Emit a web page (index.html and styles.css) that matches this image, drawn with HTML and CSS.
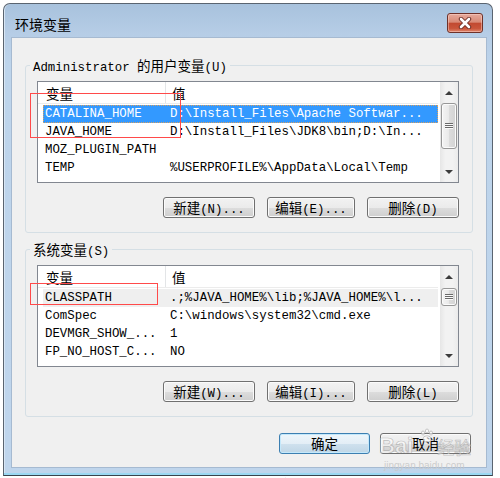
FILE: index.html
```html
<!DOCTYPE html>
<html>
<head>
<meta charset="utf-8">
<title>环境变量</title>
<link rel="stylesheet" href="styles.css">
</head>
<body>
<div class="page">
  <div class="window">
    <div class="titlebar">
      <span class="title">环境变量</span>
      <div class="close">
        <svg width="16" height="12" viewBox="0 0 16 12">
          <path d="M4 2 L12 10 M12 2 L4 10" stroke="#6a2a22" stroke-width="4.4" stroke-linecap="round" fill="none"/>
          <path d="M4 2 L12 10 M12 2 L4 10" stroke="#ffffff" stroke-width="2.6" stroke-linecap="round" fill="none"/>
        </svg>
      </div>
    </div>
    <div class="client">
      <fieldset class="group">
        <legend>Administrator <span class="cj">的用户变量</span>(U)</legend>
        <div class="listview">
          <div class="lv-main">
            <div class="lv-head"><span class="h1 cj">变量</span><span class="h2 cj">值</span></div>
            <div class="rows">
              <div class="row sel"><span class="c1">CATALINA_HOME</span><span class="c2">D:\Install_Files\Apache Softwar...</span></div>
              <div class="row"><span class="c1">JAVA_HOME</span><span class="c2">D:\Install_Files\JDK8\bin;D:\In...</span></div>
              <div class="row"><span class="c1">MOZ_PLUGIN_PATH</span><span class="c2"></span></div>
              <div class="row"><span class="c1">TEMP</span><span class="c2">%USERPROFILE%\AppData\Local\Temp</span></div>
            </div>
          </div>
          <div class="scroll">
            <div class="sb-btn"><span class="arrow-up"></span></div>
            <div class="thumb"><span class="grip"></span></div>
            <div class="sb-track"></div>
            <div class="sb-btn"><span class="arrow-down"></span></div>
          </div>
        </div>
        <div class="btnrow">
          <button class="btn"><span class="cj">新建</span>(N)...</button>
          <button class="btn"><span class="cj">编辑</span>(E)...</button>
          <button class="btn"><span class="cj">删除</span>(D)</button>
        </div>
      </fieldset>

      <fieldset class="group group-sys">
        <legend><span class="cj">系统变量</span>(S)</legend>
        <div class="listview">
          <div class="lv-main">
            <div class="lv-head"><span class="h1 cj">变量</span><span class="h2 cj">值</span></div>
            <div class="rows">
              <div class="row focus"><span class="c1">CLASSPATH</span><span class="c2">.;%JAVA_HOME%\lib;%JAVA_HOME%\l...</span></div>
              <div class="row"><span class="c1">ComSpec</span><span class="c2">C:\windows\system32\cmd.exe</span></div>
              <div class="row"><span class="c1">DEVMGR_SHOW_...</span><span class="c2">1</span></div>
              <div class="row"><span class="c1">FP_NO_HOST_C...</span><span class="c2">NO</span></div>
            </div>
          </div>
          <div class="scroll">
            <div class="sb-btn"><span class="arrow-up"></span></div>
            <div class="thumb thumb-small"><span class="grip"></span></div>
            <div class="sb-track"></div>
            <div class="sb-btn"><span class="arrow-down"></span></div>
          </div>
        </div>
        <div class="btnrow">
          <button class="btn"><span class="cj">新建</span>(W)...</button>
          <button class="btn"><span class="cj">编辑</span>(I)...</button>
          <button class="btn"><span class="cj">删除</span>(L)</button>
        </div>
      </fieldset>

      <div class="dlgbtns">
        <button class="btn btn-default"><span class="cj">确定</span></button>
        <button class="btn"><span class="cj">取消</span></button>
      </div>
    </div>
  </div>
  <div class="below">环境变量设置 完成后如图</div>

  <div class="mark mark-user"></div>
  <div class="mark mark-sys"></div>

  <div class="watermark">
    <div class="wm-top">
      <span class="wm-bai">Bai</span>
      <svg class="wm-paw" width="16" height="16" viewBox="0 0 16 16">
        <g fill="rgba(255,255,255,0.6)" stroke="rgba(150,150,150,0.6)" stroke-width="0.8">
          <ellipse cx="4" cy="5" rx="1.6" ry="2"/>
          <ellipse cx="8" cy="3" rx="1.6" ry="2"/>
          <ellipse cx="12" cy="5" rx="1.6" ry="2"/>
          <ellipse cx="8" cy="11" rx="4" ry="3.2"/>
        </g>
      </svg>
      <span class="wm-jy">经验</span>
    </div>
    <div class="wm-url">jingyan.baidu.com</div>
  </div>
</div>
</body>
</html>
```

FILE: styles.css
```css
* { box-sizing: border-box; }
html, body { margin: 0; padding: 0; }
body {
  background: #ffffff;
  font-family: "Liberation Mono", "Noto Sans CJK SC", monospace;
  font-size: 12.4px;
  color: #000;
}
.cj { font-family: "Noto Sans CJK SC", sans-serif; font-size: 13.5px; }

.page {
  position: relative;
  width: 500px;
  height: 478px;
  overflow: hidden;
  padding: 3px 0 0 3px;
}

.window {
  width: 490px;
  height: 473px;
  border: 1px solid #5a6470;
  border-bottom-color: #3a434d;
  border-radius: 7px 7px 0 0;
  background: linear-gradient(#a8c2dd 0px, #b6cde6 30px, #bdd4eb 60px, #bfd5ec 100%);
  box-shadow: inset 0 -2px 0 #9bd8f2, inset 1px 0 0 #d8e6f4;
  padding: 0 5px 0 7px;
  display: flex;
  flex-direction: column;
}

.titlebar {
  height: 33px;
  display: flex;
  justify-content: space-between;
  align-items: flex-start;
  padding: 9px 4px 0 4px;
}
.title {
  font-family: "Noto Sans CJK SC", sans-serif;
  font-size: 14px;
  line-height: 20px;
  margin-top: 1px;
  color: #000;
}
.close {
  width: 36px;
  height: 20px;
  border: 1px solid #6e3129;
  border-radius: 3px;
  background: linear-gradient(#e6aa9c 0%, #d98a76 45%, #c24a31 52%, #c9553a 80%, #df866d 100%);
  box-shadow: inset 0 0 0 1px rgba(255,220,210,0.45);
  display: flex;
  align-items: center;
  justify-content: center;
}

.client {
  height: 431px;
  border: 1px solid #a6bad1;
  background: #f0f0f0;
  padding: 19px 13px 0 13px;
}

.group {
  margin: 0;
  min-width: 0;
  border: 1px solid #d5dfe5;
  border-radius: 3px;
  padding: 8px 13px 14px 11px;
}
.group-sys { margin-top: 8px; }
.group legend {
  padding: 0 3px;
  margin-left: -7px;
  height: 16px;
  line-height: 16px;
  white-space: nowrap;
}
.group legend .cj { line-height: 16px; }

.listview {
  height: 102px;
  border: 1px solid #828790;
  background: #fff;
  display: flex;
}
.lv-main { flex: 1; min-width: 0; }
.lv-head {
  height: 22px;
  display: flex;
  border-bottom: 1px solid #ececec;
  margin-right: 2px;
}
.lv-head span { line-height: 22px; }
.h1 {
  width: 128px;
  padding-left: 8px;
  border-right: 1px solid #e3e5e7;
}
.h2 { padding-left: 6px; }
.rows { padding-top: 1px; }
.row {
  height: 18px;
  line-height: 19px;
  margin: 0 2px 0 5px;
  display: flex;
  white-space: pre;
  overflow: hidden;
}
.c1 { width: 127px; padding-left: 2px; flex: none; }
.c2 { flex: 1; }
.row.sel {
  background: #3399ff;
  color: #fff;
  outline: 1px dotted #d8a060;
  outline-offset: -1px;
}
.row.focus { background: #efefef; }

.scroll {
  width: 18px;
  background: linear-gradient(to right, #e6e6e6, #f2f2f2 30%, #f2f2f2 70%, #ebebeb);
  display: flex;
  flex-direction: column;
  align-items: center;
}
.sb-btn {
  height: 21px;
  width: 100%;
  display: flex;
  align-items: center;
  justify-content: center;
  flex: none;
}
.arrow-up {
  width: 0; height: 0;
  border-left: 4px solid transparent;
  border-right: 4px solid transparent;
  border-bottom: 4px solid #3c3c3c;
}
.arrow-down {
  width: 0; height: 0;
  border-left: 4px solid transparent;
  border-right: 4px solid transparent;
  border-top: 4px solid #3c3c3c;
}
.thumb {
  width: 16px;
  height: 46px;
  flex: none;
  border: 1px solid #979797;
  border-radius: 3px;
  background: linear-gradient(to right, #f4f4f4, #e9e9e9 50%, #dcdcdc 52%, #d3d3d3);
  box-shadow: inset 0 0 0 1px #fbfbfb;
  display: flex;
  align-items: center;
  justify-content: center;
}
.thumb-small { height: 18px; margin-top: 1px; }
.grip {
  width: 8px;
  height: 6px;
  background: repeating-linear-gradient(to bottom, #6a6a6a 0 1px, #fafafa 1px 2px);
}
.sb-track { flex: 1; }

.btnrow {
  margin-top: 14px;
  display: grid;
  grid-template-columns: 92px 88px 92px;
  column-gap: 12px;
  justify-content: end;
}
.btn {
  height: 21px;
  padding: 0;
  border: 1px solid #707070;
  border-radius: 3px;
  background: linear-gradient(#f2f2f2 0%, #ebebeb 50%, #dddddd 51%, #cfcfcf 100%);
  box-shadow: inset 0 0 0 1px #fbfbfb;
  font-family: "Liberation Mono", "Noto Sans CJK SC", monospace;
  font-size: 12.4px;
  line-height: 19px;
  color: #000;
  white-space: nowrap;
}
.btn .cj { line-height: 19px; }
.dlgbtns {
  margin-top: 16px;
  padding-right: 2px;
  display: flex;
  justify-content: flex-end;
  gap: 10px;
}
.dlgbtns .btn { width: 91px; }
.btn-default {
  border-color: #3c7fb1;
  box-shadow: inset 0 0 0 1px #c4e8fb;
  background: linear-gradient(#eef6fb 0%, #e3eef6 50%, #cfe1ee 51%, #bfd6e6 100%);
}

.below {
  margin-top: 1px;
  padding-left: 168px;
  font-family: "Noto Sans CJK SC", sans-serif;
  font-weight: bold;
  font-size: 17px;
  line-height: 17px;
  color: #111;
  white-space: nowrap;
}

.mark {
  position: absolute;
  border: 1px solid #ff4a4a;
}
.mark-user { left: 30px; top: 93px; width: 151px; height: 45px; }
.mark-sys { left: 30px; top: 283px; width: 128px; height: 22px; }

.watermark {
  position: absolute;
  left: 379px;
  top: 428px;
  width: 96px;
  pointer-events: none;
}
.wm-top { display: flex; align-items: flex-end; height: 30px; }
.wm-bai {
  font-family: "Liberation Sans", sans-serif;
  font-weight: bold;
  font-size: 22px;
  line-height: 24px;
  color: rgba(255,255,255,0.55);
  -webkit-text-stroke: 0.7px rgba(140,140,140,0.55);
}
.wm-paw { margin: 0 2px 14px 6px; }
.wm-jy {
  font-family: "Noto Sans CJK SC", sans-serif;
  font-size: 17px;
  line-height: 22px;
  color: rgba(255,255,255,0.55);
  -webkit-text-stroke: 0.6px rgba(140,140,140,0.55);
}
.wm-url {
  font-family: "Liberation Sans", sans-serif;
  font-size: 10px;
  line-height: 12px;
  padding-left: 5px;
  margin-top: 2px;
  color: rgba(200,200,200,0.9);
}
```
